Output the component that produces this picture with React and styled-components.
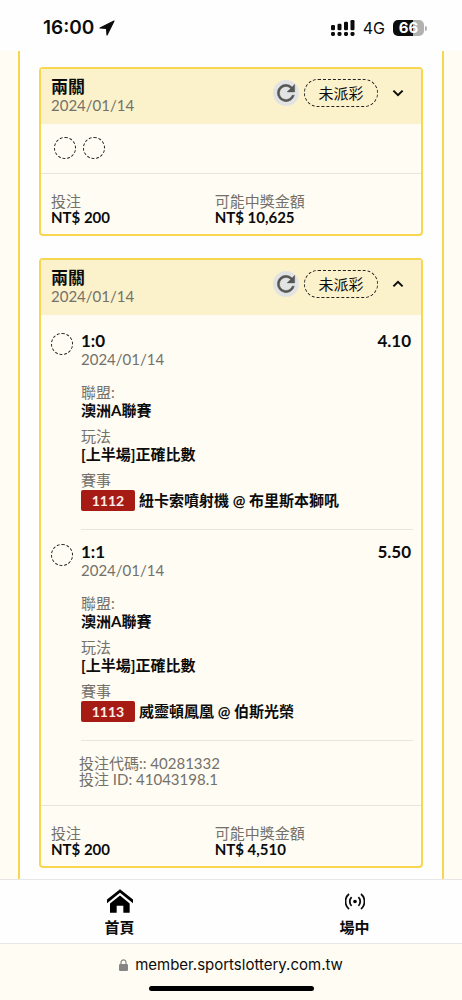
import { useState } from "react";
import styled, { createGlobalStyle } from "styled-components";

const GlobalStyle = createGlobalStyle`
  * {
    box-sizing: border-box;
  }
  body {
    margin: 0;
    background: #fffcf4;
    color: #0c0c0c;
    font-family: Lato, "Noto Sans CJK TC", sans-serif;
    font-size: 15px;
  }
`;

const Page = styled.div`
  min-height: 100vh;
  display: flex;
  flex-direction: column;
`;

const StatusBar = styled.header`
  display: flex;
  justify-content: space-between;
  height: 51px;
  padding: 4px 38px 0 43px;
  background: #fefefe;
  font-family: Inter, sans-serif;
`;

const StatusGroup = styled.div`
  display: flex;
  align-items: center;
  gap: ${(props) => props.$gap}px;
`;

const Clock = styled.span`
  font-size: 19px;
  font-weight: 600;
`;

const Network = styled.span`
  font-size: 16px;
`;

const Battery = styled.span`
  position: relative;
  width: 31px;
  height: 16px;
  border-radius: 5px;
  background: linear-gradient(to right, #0c0c0c 66%, #b1b1b1 66%);
  color: #fff;
  font-size: 15px;
  font-weight: 700;
  line-height: 16px;
  text-align: center;

  &::after {
    content: "";
    position: absolute;
    right: -3px;
    top: 6px;
    width: 2px;
    height: 5px;
    border-radius: 0 2px 2px 0;
    background: #b1b1b1;
  }
`;

const Rail = styled.main`
  flex: 1;
  display: flex;
  flex-direction: column;
  gap: 22px;
  margin: 0 18px;
  padding: 16px 19px 11px;
  border: solid #f7d74f;
  border-width: 0 2px;
  background: #fefefe;
`;

const Card = styled.section`
  border: 2px solid #f7d74f;
  border-radius: 4px;
  background: #fffcf4;
`;

const CardHeader = styled.div`
  display: flex;
  justify-content: space-between;
  padding: 9px 10px 10px;
  background: #fbf1cb;
`;

const CardTitle = styled.h2`
  margin: 0;
  font-size: 17px;
  font-weight: 700;
  line-height: 18px;
`;

const DateText = styled.div`
  color: #73716a;
  line-height: 18px;
`;

const Actions = styled.div`
  display: flex;
  align-items: center;
  height: 30px;
`;

const IconButton = styled.button`
  display: flex;
  align-items: center;
  justify-content: center;
  width: 26px;
  height: 26px;
  padding: 0;
  border: 0;
  border-radius: 50%;
  background: ${(props) => (props.$filled ? "#e2e3e3" : "none")};
  color: ${(props) => (props.$filled ? "#555" : "#0c0c0c")};
`;

const Status = styled.span`
  width: 74px;
  margin: 0 7px 0 5px;
  border: 1px dashed #222;
  border-radius: 14px;
  line-height: 26px;
  text-align: center;
`;

const Ring = styled.div`
  flex: none;
  width: 22px;
  height: 22px;
  border: 1px dashed #222;
  border-radius: 50%;
`;

const Rings = styled.div`
  display: flex;
  gap: 7px;
  padding: 13px 13px 14px;
`;

const Leg = styled.article`
  display: flex;
  gap: 8px;
  padding: ${(props) => (props.$first ? 17 : 13)}px 8px 0 10px;
`;

const RingSlot = styled.div`
  padding-top: 1px;
`;

const LegBody = styled.div`
  flex: 1;
  padding-bottom: 18px;
  border-bottom: 1px solid #e8e5de;
`;

const LegHead = styled.div`
  display: flex;
  justify-content: space-between;
  padding-right: 2px;
  font-size: 17px;
  font-weight: 700;
  line-height: 18px;
`;

const Details = styled.dl`
  display: flex;
  flex-direction: column;
  gap: 8px;
  margin: 15px 0 0;
`;

const Label = styled.dt`
  color: #73716a;
  line-height: 18px;
`;

const Value = styled.dd`
  margin: 0;
  font-weight: 700;
  line-height: 18px;
`;

const Match = styled(Value)`
  display: flex;
  gap: 4px;
  padding-top: 1px;
  line-height: 21px;
`;

const Code = styled.span`
  width: 54px;
  border-radius: 2px;
  background: #a61c14;
  color: #fdeeea;
  font-size: 14px;
  text-align: center;
`;

const Reference = styled.div`
  padding: 14px 38px 18px;
  color: #73716a;
  line-height: 16px;
`;

const Totals = styled.dl`
  display: grid;
  grid-template-columns: 5fr 6fr;
  margin: 0;
  padding: 19px 10px 9px;
  border-top: 1px solid #e8e5de;

  dt,
  dd {
    line-height: 16px;
  }
`;

const TabBar = styled.nav`
  display: grid;
  grid-template-columns: 1fr 1fr;
  gap: 20px;
  height: 65px;
  padding: 8px 0 0 12px;
  border: solid #e6e6e6;
  border-width: 1px 0;
  background: #fefefe;
`;

const Tab = styled.a`
  display: flex;
  flex-direction: column;
  align-items: center;
  gap: 3px;
  color: inherit;
  font-weight: 700;
  line-height: 20px;
  text-decoration: none;
`;

const TabIcon = styled.span`
  display: flex;
  align-items: center;
  height: 26px;
`;

const BrowserBar = styled.footer`
  display: flex;
  flex-direction: column;
  align-items: center;
  height: 56px;
  padding-top: 11px;
  font-family: Inter, sans-serif;
`;

const Address = styled.div`
  display: flex;
  align-items: center;
  gap: 7px;
  line-height: 20px;
`;

const HomeIndicator = styled.div`
  width: 165px;
  height: 5px;
  margin-top: 11px;
  border-radius: 3px;
  background: #000;
`;

const LocationIcon = () => (
  <svg width="16" height="16" viewBox="0 0 16 16">
    <path
      d="M15 1L1 8L7.6 8.4L8 15Z"
      fill="#0c0c0c"
      stroke="#0c0c0c"
      strokeWidth="1.2"
      strokeLinejoin="round"
    />
  </svg>
);

const SignalIcon = () => (
  <svg width="24" height="16" viewBox="0 0 24 16">
    {[5, 3.7, 1.8, 0].map((top, i) => (
      <g key={top} fill="#0c0c0c">
        <rect x={i * 6.5} y={top} width="4" height={10.2 - top} rx="1.2" />
        <rect x={i * 6.5} y="12" width="4" height="4" rx="1.4" />
      </g>
    ))}
  </svg>
);

const RefreshIcon = () => (
  <svg
    width="26"
    height="26"
    viewBox="0 0 24 24"
    fill="currentColor"
    stroke="currentColor"
    strokeWidth="0.4"
  >
    <path d="M17.65 6.35A7.96 7.96 0 0 0 12 4a8 8 0 1 0 7.73 10h-2.08A6 6 0 1 1 12 6c1.66 0 3.14.69 4.22 1.78L13 11h7V4z" />
  </svg>
);

const ChevronIcon = ({ up }) => (
  <svg width="12" height="8" viewBox="0 0 12 8">
    <path
      d={up ? "M1.4 6.4L6 1.8L10.6 6.4" : "M1.4 1.6L6 6.2L10.6 1.6"}
      fill="none"
      stroke="currentColor"
      strokeWidth="2"
    />
  </svg>
);

const HomeIcon = () => (
  <svg width="26" height="24" viewBox="0 0 78 71">
    <path d="M0 31L39 0L78 31V42L39 11L0 42Z" />
    <path d="M9 43L39 19L68 43V71H49V50H29V71H9Z" />
  </svg>
);

const LiveIcon = () => (
  <svg width="20" height="17" viewBox="0 0 20 17">
    <circle cx="10" cy="8.5" r="1.8" />
    <g fill="none" stroke="#0c0c0c" strokeWidth="1.8">
      <path d="M6.6 4.1A6.2 6.2 0 0 0 6.6 12.9M13.4 4.1A6.2 6.2 0 0 1 13.4 12.9" />
      <path d="M4 1A9.8 9.8 0 0 0 4 16M16 1A9.8 9.8 0 0 1 16 16" />
    </g>
  </svg>
);

const LockIcon = () => (
  <svg width="9" height="12" viewBox="0 0 9 12">
    <rect y="5" width="9" height="7" rx="1.2" fill="#858585" />
    <path
      d="M2 5.5V3.4a2.5 2.5 0 0 1 5 0V5.5"
      fill="none"
      stroke="#858585"
      strokeWidth="1.2"
    />
  </svg>
);

const bets = [
  {
    id: 1,
    date: "2024/01/14",
    stake: "NT$ 200",
    payout: "NT$ 10,625",
    legs: [],
    open: false,
  },
  {
    id: 2,
    date: "2024/01/14",
    stake: "NT$ 200",
    payout: "NT$ 4,510",
    open: true,
    legs: [
      { pick: "1:0", odds: "4.10", code: "1112", match: "紐卡索噴射機 @ 布里斯本獅吼" },
      { pick: "1:1", odds: "5.50", code: "1113", match: "威靈頓鳳凰 @ 伯斯光榮" },
    ],
  },
];

const BetLeg = ({ leg, first }) => (
  <Leg $first={first}>
    <RingSlot>
      <Ring />
    </RingSlot>
    <LegBody>
      <LegHead>
        <span>{leg.pick}</span>
        <span>{leg.odds}</span>
      </LegHead>
      <DateText>2024/01/14</DateText>
      <Details>
        <div>
          <Label>聯盟:</Label>
          <Value>澳洲A聯賽</Value>
        </div>
        <div>
          <Label>玩法</Label>
          <Value>[上半場]正確比數</Value>
        </div>
        <div>
          <Label>賽事</Label>
          <Match>
            <Code>{leg.code}</Code>
            <span>{leg.match}</span>
          </Match>
        </div>
      </Details>
    </LegBody>
  </Leg>
);

const BetCard = ({ bet }) => {
  const [open, setOpen] = useState(bet.open);

  return (
    <Card>
      <CardHeader>
        <div>
          <CardTitle>兩關</CardTitle>
          <DateText>{bet.date}</DateText>
        </div>
        <Actions>
          <IconButton $filled aria-label="重新整理">
            <RefreshIcon />
          </IconButton>
          <Status>未派彩</Status>
          <IconButton
            aria-label="展開"
            aria-expanded={open}
            onClick={() => setOpen(!open)}
          >
            <ChevronIcon up={open} />
          </IconButton>
        </Actions>
      </CardHeader>
      {open && bet.legs.length > 0 ? (
        <>
          {bet.legs.map((leg, i) => (
            <BetLeg key={leg.code} leg={leg} first={i === 0} />
          ))}
          <Reference>
            <div>投注代碼:: 40281332</div>
            <div>投注 ID: 41043198.1</div>
          </Reference>
        </>
      ) : (
        <Rings>
          <Ring />
          <Ring />
        </Rings>
      )}
      <Totals>
        <div>
          <Label>投注</Label>
          <Value>{bet.stake}</Value>
        </div>
        <div>
          <Label>可能中獎金額</Label>
          <Value>{bet.payout}</Value>
        </div>
      </Totals>
    </Card>
  );
};

const App = () => (
  <Page lang="zh-Hant">
    <GlobalStyle />
    <StatusBar>
      <StatusGroup $gap={5}>
        <Clock>16:00</Clock>
        <LocationIcon />
      </StatusGroup>
      <StatusGroup $gap={8}>
        <SignalIcon />
        <Network>4G</Network>
        <Battery>66</Battery>
      </StatusGroup>
    </StatusBar>
    <Rail>
      {bets.map((bet) => (
        <BetCard key={bet.id} bet={bet} />
      ))}
    </Rail>
    <TabBar>
      <Tab href="#home">
        <TabIcon>
          <HomeIcon />
        </TabIcon>
        首頁
      </Tab>
      <Tab href="#live">
        <TabIcon>
          <LiveIcon />
        </TabIcon>
        場中
      </Tab>
    </TabBar>
    <BrowserBar>
      <Address>
        <LockIcon />
        member.sportslottery.com.tw
      </Address>
      <HomeIndicator />
    </BrowserBar>
  </Page>
);

export default App;
